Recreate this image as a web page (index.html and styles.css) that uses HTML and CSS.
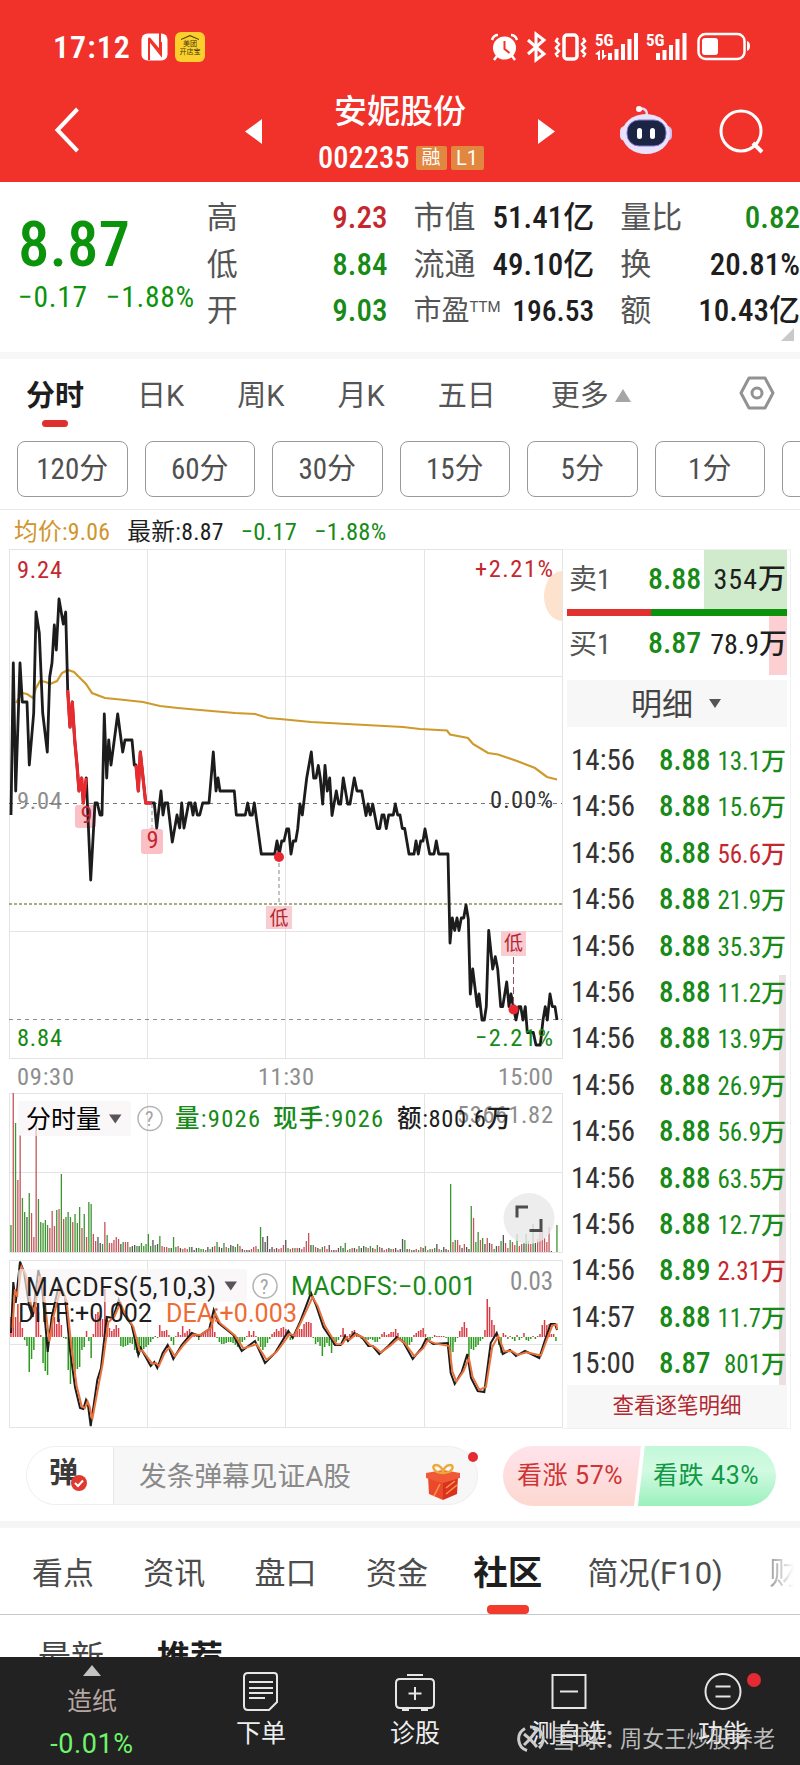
FILE: index.html
```
<!DOCTYPE html>
<html lang="zh-CN">
<head>
  <meta charset="UTF-8" />
  <meta name="viewport" content="width=device-width, initial-scale=1.0"/>
  <title>安妮股份 002235</title>
  <link rel="stylesheet" href="styles.css">
</head>
<body>

  <header>
    <div class="status">
      <span class="clock">17:12</span>
      <svg class="nfc" width="28" height="28" viewBox="0 0 28 28">
        <rect x="0.5" y="0.5" width="26" height="27" rx="6" fill="#fff"/>
        <path d="M8 27V7l12 15V9" fill="none" stroke="#f0322b" stroke-width="2"/>
        <path d="M19 0v18L8 5" fill="none" stroke="#f0322b" stroke-width="2"/>
      </svg>
      <span class="app"><i></i>美团<br>开店宝</span>
      <svg class="status-icons" width="262" height="32" viewBox="489 31 262 32">
        <g fill="#fff" stroke="#fff">
          <circle cx="503.500" cy="48" r="11.500" stroke="none"/>
          <path d="M491 40c1-3 3-5 6-5M516 40c-1-3-3-5-6-5M496 56l-3 4M511 56l3 4" fill="none" stroke-width="2.500"/>
          <path d="M503.500 41v8l5 4" fill="none" stroke="#f0322b" stroke-width="2"/>
          <path d="M527 40l16 14-8 6V34l8 6-16 14" fill="none" stroke-width="3"/>
          <rect x="563" y="35" width="13" height="24" rx="3" fill="none" stroke-width="3.500"/>
          <path d="M557 38l-2 3 3 3-3 4 3 3-3 3 2 3M582 38l2 3-3 3 3 4-3 3 3 3-2 3" fill="none" stroke-width="2.500"/>
          <g stroke="none">
            <path d="M607 53h4v7h-4zM613.500 49h4v11h-4zM620 44h4v16h-4zM626.500 39h4v21h-4zM633 33h4v27h-4z"/>
            <path d="M655 53h4v7h-4zM661.500 50h4v10h-4zM668 45h4v15h-4zM674.500 39h4v21h-4zM681.500 33h4v27h-4z"/>
            <path d="M594 54l5-4v10h-2v-5zM601 50v10l5-5h-3v-5z"/>
            <rect x="701" y="38" width="16" height="17" rx="3"/>
            <path d="M746 41c4 1 4 9 0 10z"/>
          </g>
          <rect x="697.500" y="34" width="46" height="25" rx="7" fill="none" stroke-width="2.500"/>
        </g>
        <g class="five-g"><text x="594" y="46">5G</text><text x="645" y="46">5G</text></g>
      </svg>
    </div>
    <nav class="title-bar">
      <svg class="back" width="26" height="46" viewBox="0 0 26 46"><path d="M23.500 2L3.500 23l20 21" fill="none" stroke="#fff" stroke-width="4"/></svg>
      <svg class="prev" width="17" height="25" viewBox="0 0 17 25"><path d="M17 0v25L0 12.500z" fill="#fff"/></svg>
      <div class="stock">
        <h1>安妮股份</h1>
        <p>002235<span class="badge">融</span><span class="badge">L1</span></p>
      </div>
      <svg class="next" width="17" height="25" viewBox="0 0 17 25"><path d="M0 0v25l17-12.500z" fill="#fff"/></svg>
      <svg class="robot" width="54" height="50" viewBox="618 105 54 50">
        <path d="M637 109q9-2 9 6" fill="none" stroke="#e4d9fa" stroke-width="2.500"/>
        <circle cx="638" cy="109" r="3" fill="#fff"/>
        <rect x="619" y="126" width="10" height="15" rx="5" fill="#e8dcfb"/>
        <rect x="661" y="126" width="10" height="15" rx="5" fill="#cfc0f7"/>
        <ellipse cx="645" cy="134" rx="24" ry="20" fill="#e9e2fd"/>
        <rect x="626" y="120" width="39" height="26" rx="12" fill="#1b2442" stroke="#8277d8" stroke-width="1"/>
        <rect x="636" y="128" width="5" height="11" rx="2.500" fill="#fff"/>
        <rect x="649" y="128" width="5" height="11" rx="2.500" fill="#fff"/>
      </svg>
      <svg class="search" width="46" height="46" viewBox="0 0 46 46"><circle cx="22" cy="22" r="20" fill="none" stroke="#fff" stroke-width="3"/><path d="M34 34l9 9" stroke="#fff" stroke-width="4"/></svg>
    </nav>
  </header>

  <section class="quote">
    <div class="now">
      <b>8.87</b>
      <p><span>−0.17</span><span>−1.88%</span></p>
    </div>
    <dl class="col1">
      <dt>高</dt><dd class="up">9.23</dd>
      <dt>低</dt><dd class="down">8.84</dd>
      <dt>开</dt><dd class="down">9.03</dd>
    </dl>
    <dl class="col2">
      <dt>市值</dt><dd>51.41亿</dd>
      <dt>流通</dt><dd>49.10亿</dd>
      <dt class="pe">市盈<sup>TTM</sup></dt><dd class="pe-value">196.53</dd>
    </dl>
    <dl class="col3">
      <dt>量比</dt><dd class="down">0.82</dd>
      <dt>换</dt><dd>20.81%</dd>
      <dt>额</dt><dd>10.43亿</dd>
    </dl>
    <i class="corner"></i>
  </section>

  <section class="period">
    <div class="tabs">
      <span class="active">分时</span><span>日K</span><span>周K</span><span>月K</span><span>五日</span><span>更多<i class="tri-up"></i></span>
      <svg width="36" height="34" viewBox="0 0 36 34"><path d="M10 2h16l8 15-8 15H10L2 17z" fill="none" stroke="#929292" stroke-width="3" stroke-linejoin="round"/><circle cx="18" cy="17" r="5" fill="none" stroke="#929292" stroke-width="3"/></svg>
    </div>
    <div class="minutes">
      <span>120分</span><span>60分</span><span>30分</span><span>15分</span><span>5分</span><span>1分</span><span></span>
    </div>
    <p class="latest"><span class="avg">均价:9.06</span><span>最新:8.87</span><span class="down">−0.17</span><span class="down">−1.88%</span></p>
  </section>

  <main>
    <svg class="chart" width="563" height="880" viewBox="0 549 563 880">
      <g class="grid">
        <path d="M9.500 549.500H562.500V1058.500H9.500zM147.500 549V1058M285.500 549V1058M424.500 549V1058M9 676.500H562M9 931.500H562"/>
        <path d="M9.500 1093.500H562.500V1252.500H9.500zM147.500 1093V1252M285.500 1093V1252M424.500 1093V1252M9 1172.500H562"/>
        <path d="M9.500 1260.500H562.500V1427.500H9.500zM147.500 1260V1427M285.500 1260V1427M424.500 1260V1427M9 1344.500H562"/>
      </g>
      <path d="M562 571a18 25 0 0 0 0 50z" fill="#fde3cd"/>

      <!-- price -->
      <g class="nums">
        <text x="17" y="578" class="up" textLength="45">9.24</text>
        <text x="475" y="577" class="up" textLength="78">+2.21%</text>
        <text x="17" y="809" class="grey" textLength="45">9.04</text>
        <text x="17" y="1046" class="down" textLength="45">8.84</text>
      </g>
      <path d="M9 803.500H562" stroke="#777" stroke-dasharray="4 4"/>
      <path d="M9 904H562" stroke="#8b9460" stroke-width="1.500" stroke-dasharray="3 2"/>
      <path d="M9 1019.500H562" stroke="#8d8d80" stroke-dasharray="4 4"/>
      <polyline class="avg-line" points="16,703 22,693 27,694 33,698 36,688 40,681 46,682 50,684 57,681 62,673 68,670 74,672 79,677 86,684 92,693 105,698 120,699.5 143,702 160,706 178,708 200,710 235,713 255,714 268,718 280,719 311,722 347,724 403,727 420,729 447,730.5 450,734.5 468,738 473,744 488,753 498,754.5 517,761 535,768 547,777 557,779.5"/>
      <rect x="75" y="805" width="21" height="23" rx="3" class="mark"/>
      <path d="M141 832q0-3 3-3h5l3-3 3 3h5q3 0 3 3v19q0 3-3 3h-16q-3 0-3-3z" class="mark"/>
      <polyline class="price" points="11,815 13.3,663 15.7,791 20,663 22.3,702 27,702 29.3,765 33.7,713 36,612 39.3,633 42.7,713 47.3,752 49.7,677 52,663 54.3,625 56.3,650 59,599 63.3,624 65.7,612 67.7,690 70,727 72.3,702 74.7,740 77,765 79,791 81.7,778 83.3,803 86.3,778 90.7,880 95,803 97.3,803 100,815 102,815 104.3,714 106.7,778 108.7,740 111,765 117.7,714 122.7,752 125,740 132,740 134.3,765 136,765 138.3,791 140.3,752 145.7,803 154.3,803 156.7,828 161,791 163,815 165,803 167.7,803 172.3,842 177,815 179.7,828 181.7,803 184,828 188.7,803 191,803 193,815 195,803 197.3,815 199.7,815 202.7,803 209,803 213.3,752 216,791 218,778 220,791 234.3,791 236.3,815 245.3,815 247.7,803 250,815 252.3,815 254.3,803 261.3,854 274.7,854 277,841 279.3,854 281.7,841 284,841 286.7,829 288.7,829 291,854 293.3,841 295.7,841 297.7,829 300,804 302.3,815 306.7,778 311.3,752 313.7,778 316,778 318.3,765.5 320.3,778 322.7,804 325,765.5 327.3,791 329.7,778 332,815.5 336.3,791 338.7,804 340.7,804 343.3,778 347.7,804 350,804 354.3,778 357,791 361.7,791 366,815.5 368,804 370.3,815 372.7,804 377.3,828.5 379.7,828.5 382,815 384,815 386.3,828.5 388.7,815 393.3,815 395.3,804 397.7,815 400,815 402.3,828.5 404.7,828.5 409,854 414,854 416,841 418.3,854 420.7,841 423,841 425,829 429.7,854 434,854 436.3,841 438.7,854 448,854 450,943 452.3,918 454.7,930.5 457,918 459,930.5 461.3,918 463.7,918 466,905 468.3,919 470.3,994 472.7,969 477.3,1006.6 479,994 482,1020 484.3,1020 486.3,1006.6 488.7,930.5 492.7,969 495.3,956.7 497.7,969 500.7,1006.6 502.7,1006.6 506.7,982 509,1006.6 511,994 513.3,1006.6 516,1020 518.7,1006.6 520.7,1006.6 523,1020 525.3,1006.6 527.3,1032.5 533.3,1032.5 536,1045 540.3,1045 543,1020 545.3,1006.6 547.3,1020 550,994 552.3,1006.6 555,1006.6 557,1020"/>
      <polyline class="price hot" points="67.7,690 70,727 72.3,702 74.7,740 77,765 79,791 81.7,778 83.3,803 86.3,778"/>
      <polyline class="price hot" points="136,765 138.3,791 140.3,752 145.7,803 152,803"/>
      <g class="nums">
        <text x="490" y="808" textLength="63" fill="#333">0.00%</text>
        <text x="475" y="1046" class="down" textLength="78">−2.21%</text>
        <text x="80.500" y="823" class="up">9</text>
        <text x="146.500" y="848" class="up">9</text>
      </g>
      <path d="M152 804V826M279 863V905" stroke="#888" stroke-dasharray="4 3"/>
      <path d="M513.500 957V1005" stroke="#8c5560" stroke-dasharray="7 3"/>
      <circle cx="279" cy="857" r="5" fill="#ea2630"/>
      <circle cx="513.500" cy="1009.500" r="5" fill="#ea2630"/>
      <rect x="266" y="906" width="26" height="23" class="low"/>
      <rect x="501" y="931" width="25" height="25" class="low"/>
      <g class="low-text"><text x="269.500" y="925">低</text><text x="504" y="950">低</text></g>
      <g class="nums grey">
        <text x="17" y="1084.500" textLength="57">09:30</text>
        <text x="258" y="1084.500" textLength="56">11:30</text>
        <text x="498" y="1084.500" textLength="55">15:00</text>
      </g>

      <!-- volume -->
      <g id="volume"></g>
      <rect x="18" y="1101" width="113" height="35" rx="3" class="pick"/>
      <text x="26" y="1128" class="label">分时量</text>
      <path d="M109 1114.500h12.500l-6.200 9z" fill="#58545a"/>
      <circle cx="150" cy="1118.500" r="12" class="help"/>
      <text x="145" y="1126" class="help-text">?</text>
      <g class="nums">
        <text x="457" y="1123" textLength="96" class="grey">53661.82</text>
        <text x="175" y="1127" textLength="85" class="down">量:9026</text>
        <text x="273" y="1127" textLength="110" class="down">现手:9026</text>
        <text x="397" y="1127" textLength="114" fill="#1e1e1e">额:800.6万</text>
      </g>
      <circle cx="529" cy="1218.500" r="25.500" fill="#e9e9e9" fill-opacity="0.800"/>
      <path d="M517 1217.500v-10.500h11M541 1219v11.500h-11.500" fill="none" stroke="#4d4d4d" stroke-width="3"/>

      <!-- macd -->
      <g id="macd"></g>
      <polyline id="diff" class="diff" points="11,1333 13.3,1282 15.7,1303 20,1261.7 24,1272 29.3,1307 32.7,1317 38.3,1270 41.7,1283 47.7,1352 51.7,1317 59.3,1283 65,1297 70,1350 75,1387 80,1408 83.3,1409 86,1400 88,1405 90.7,1426 97.3,1380 101,1368 106.7,1317 113,1318 118.7,1300 123,1313 131.7,1325 138.3,1355 140.7,1348 150.7,1366 154.3,1362 157.3,1368 162.7,1353 167.7,1345 173.3,1359 181.7,1345 191.7,1333 199,1336 209.3,1329 213.7,1310 218.3,1323 233.3,1335 241.7,1351 255,1341 265,1363 275,1353 288.3,1331 292.7,1338 300,1322 311,1293 316,1305 323.3,1327 330,1337 335,1345 340.7,1345 345,1336 348,1341 354.3,1333 361.7,1337 368.3,1346 372.7,1346 379.3,1354 388.3,1346 396.7,1337 403.3,1342 412.7,1359 421.7,1348 426,1339 433.3,1344 447.7,1343 450.7,1373 454.7,1384 461.7,1372 467.3,1354 471,1378 477.7,1391 484.3,1392 490.7,1343 496.7,1333 502.7,1354 510,1350 516,1356 525,1351 539.3,1358 545,1340 550.7,1324 555,1324 557,1330"/>
      <polyline id="dea" class="dea"/>
      <rect x="18" y="1269" width="229" height="33" rx="3" class="pick"/>
      <path d="M224.500 1281.500h12.500l-6.200 9z" fill="#58545a"/>
      <circle cx="265" cy="1286" r="12" class="help"/>
      <text x="260" y="1293.500" class="help-text">?</text>
      <g class="nums wide">
        <text x="26" y="1295.500" textLength="190" fill="#1e1e1e">MACDFS(5,10,3)</text>
        <text x="291" y="1294.500" textLength="185" class="down">MACDFS:−0.001</text>
        <text x="510" y="1290" textLength="43" class="grey narrow">0.03</text>
        <text x="18" y="1321.500" textLength="134" fill="#1e1e1e">DIFF:+0.002</text>
        <text x="166" y="1321.500" textLength="131" fill="#ee6b35">DEA:+0.003</text>
      </g>
    </svg>

    <aside>
      <div class="order sell"><span>卖1</span><b>8.88</b><em>354万</em></div>
      <div class="ratio"><i></i></div>
      <div class="order buy"><span>买1</span><b>8.87</b><em>78.9万</em></div>
      <div class="detail">明细<i class="tri-down"></i></div>
      <ul id="trades"></ul>
      <div class="more">查看逐笔明细</div>
    </aside>
  </main>

  <section class="danmu">
    <div class="input">
      <span class="dan">弹<svg width="16" height="16" viewBox="0 0 16 16"><circle cx="8" cy="8" r="8" fill="#e03a30"/><path d="M4 8l3 3 5-5.500" fill="none" stroke="#fff" stroke-width="2"/></svg></span>
      <span class="hint">发条弹幕见证A股</span>
      <svg class="gift" width="36" height="38" viewBox="425 1463 36 38">
        <path d="M428 1477l15 4v19l-14-6z" fill="#ea4a2b"/>
        <path d="M458 1477l-15 4v19l14-6z" fill="#d9331f"/>
        <path d="M426 1473l17-3 17 3v5l-17 5-17-5z" fill="#f15a37"/>
        <path d="M446 1494l11-9M446 1488l9-7M434 1496l6-12" stroke="#f99a4b" stroke-width="1.500"/>
        <path d="M443 1473c-10 0-12-8-7-8 4 0 7 4 7 8 0-4 3-8 7-8 5 0 3 8-7 8z" fill="none" stroke="#eba936" stroke-width="2.500"/>
      </svg>
      <i class="dot"></i>
    </div>
    <div class="vote">
      <span class="rise">看涨 57%</span><span class="fall">看跌 43%</span>
    </div>
  </section>

  <section class="community">
    <div class="tabs2">
      <span>看点</span><span>资讯</span><span>盘口</span><span>资金</span><span class="active">社区</span><span>简况(F10)</span><span class="fade">财</span>
    </div>
    <div class="sub"><span>最新</span><b>推荐</b></div>
  </section>

  <footer>
    <div class="index"><i class="tri-up"></i><span>造纸</span><em>-0.01%</em></div>
    <div class="item">
      <svg width="42" height="42" viewBox="0 0 42 42"><path d="M8 2h26q3 0 3 3v26l-8 8H8q-4 0-4-4V6q0-4 4-4zM9 11h24M9 17h24M9 22h24M9 27h16" /></svg>
      <span>下单</span>
    </div>
    <div class="item">
      <svg width="42" height="42" viewBox="0 0 42 42"><path d="M6 8h30q4 0 4 4v21q0 4-4 4H6q-4 0-4-4V12q0-4 4-4zM13 4h16M21 16v13M14.500 22.500h13M8 39h7M27 39h7"/></svg>
      <span>诊股</span>
    </div>
    <div class="item">
      <svg width="42" height="42" viewBox="0 0 42 42"><path d="M4.500 4h33v33h-33zM12 20.500h18"/></svg>
      <span>测自选</span>
    </div>
    <div class="item">
      <svg width="42" height="42" viewBox="0 0 42 42"><circle cx="21" cy="20.500" r="17.500"/><path d="M13.500 15.500h15M13.500 25.500h15"/></svg>
      <span>功能</span>
      <i class="dot"></i>
    </div>
    <div class="watermark">
      <svg width="28" height="28" viewBox="0 0 28 28"><path d="M10 25.500A12 12 0 0 1 8 3.500M13 2a12 12 0 0 1 9 21M7 9l6 5-6 6M20 5l-7 9 7 8" fill="none" stroke="#ccc" stroke-width="3"/></svg>
      <span>雪球：</span><span>周女王炒股养老</span>
    </div>
  </footer>

  <script>
    const STEP = 2.29;
    const COLORS = { r: '#c8545a', g: '#3f9433', k: '#555' };

    // one entry per minute, colour + height
    const volume = ('g27 r159 g129 r72 r117 g54 g40 k35 g59 r39 r15 r126 g53 g30 g29 g32 g27 r24 r41 r26 g42 r43 g78 r33 g35 g40 g35 r30 g38 g29 g45 r24 g38 r15 g50 g48 r18 r11 k15 k9 g8 r30 g17 r9 r9 r12 r15 r13 k8 g10 r10 r10 g5 k6 k7 g6 k6 g9 g6 g8 g18 g6 k12 g7 k8 g16 r6 r5 r5 g4 k4 g15 g5 r6 k4 r3 r4 r3 g5 k5 k2 k4 g4 g3 g3 ' +
      'r2 k5 g3 k5 r6 g10 k5 k4 g9 r5 g4 k7 k6 g5 g8 r6 k3 r2 k2 k2 r3 r5 r6 g3 g25 k15 k10 k16 k3 k5 r3 k4 r3 r4 r7 k12 g4 r3 r4 g4 r4 k4 r3 r5 r11 r19 k7 g7 r5 k4 r3 g5 r6 r3 k7 r2 k2 r2 k4 g6 k4 g9 r2 g3 r4 k4 r3 g6 k4 k6 g5 r4 g6 k4 r3 g7 r5 k4 r2 r3 k4 g3 r3 k4 r2 k3 k13 g12 k3 r3 g2 ' +
      'k2 r3 g2 r5 k4 g6 r2 g3 r3 g4 k8 r3 g2 k5 k3 r2 g68 r10 g12 r12 r7 k4 r8 k5 k3 g46 r34 g10 g20 r12 g14 k8 r14 k9 r8 g3 k6 r6 g11 k17 r9 r4 g12 r10 r7 g18 r6 r8 k9 g18 r11 r8 g28 k9 r13 r20 r21 r14 r10 r25 k1').trim().split(/\s+/);

    const macd = [20,25,20,33,15,9,-3,-9,-35,-22,-13,30,25,2,-26,-34,-38,-2,12,20,13,18,12,-1,-2,-33,-47,-20,-35,-32,-30,-13,-10,6,-4,-21,3,23,25,22,18,48,20,9,6,8,12,9,-9,-10,-9,-8,-6,-7,-13,-16,-18,-14,-12,-10,-8,-5,-2,1,-1,12,6,6,7,2,-4,-8,1,5,2,11,4,6,8,5,2,1,-3,2,3,5,8,13,17,5,-1,-5,-7,-7,-6,-5,-5,-6,-8,-10,-8,-5,-3,1,6,2,6,1,-4,-10,-13,-10,-6,-2,3,5,8,6,9,10,8,5,-3,1,2,6,8,8,13,15,15,14,-1,-7,-5,-9,-19,-10,-6,-9,-16,-8,-5,-3,2,9,3,1,3,6,7,4,1,-2,-3,-6,-3,-2,-3,-5,-5,-2,3,5,2,3,5,5,8,4,-2,-6,-9,-11,-8,-5,2,4,6,7,9,3,-2,-3,-1,2,1,1,1,1,-1,-12,-20,-15,-5,-1,6,10,15,9,-20,-12,-13,-10,-8,-4,-2,7,38,30,17,12,4,-8,-16,4,2,-2,1,-2,-4,2,-3,-1,4,-3,-4,-2,1,-2,1,3,12,17,12,13,3,3,-4];

    function bar(x, y, h, color, w) {
      return `<rect x="${x.toFixed(1)}" y="${y}" width="${w}" height="${h}" fill="${color}"/>`;
    }
    document.getElementById('volume').innerHTML = volume.slice(0, 237)
      .map((v, i) => bar(10.3 + i * STEP, 1252 - v.slice(1), v.slice(1), COLORS[v[0]], 1.3)).join('') + bar(556.3, 1225, 27, COLORS.g, 1.3);
    document.getElementById('macd').innerHTML = macd
      .map((v, i) => bar(10.2 + i * STEP, v > 0 ? 1337 - v : 1337, Math.abs(v), v > 0 ? '#d93c45' : '#2f9a22', 1.5)).join('');

    // signal line follows the diff line a little behind
    const diff = document.getElementById('diff').getAttribute('points').split(' ').map(p => p.split(',').map(Number));
    document.getElementById('dea').setAttribute('points', diff.map(([x, y], i) => {
      const a = diff[Math.max(i - 1, 0)][1], b = diff[Math.min(i + 1, diff.length - 1)][1];
      return Math.min(x + 1.6, 557) + ',' + (y * 0.8 + (a + b) * 0.1);
    }).join(' '));

    const trades = [
      ['14:56', '8.88', '13.1万'], ['14:56', '8.88', '15.6万'], ['14:56', '8.88', '56.6万', 'up'],
      ['14:56', '8.88', '21.9万'], ['14:56', '8.88', '35.3万'], ['14:56', '8.88', '11.2万'],
      ['14:56', '8.88', '13.9万'], ['14:56', '8.88', '26.9万'], ['14:56', '8.88', '56.9万'],
      ['14:56', '8.88', '63.5万'], ['14:56', '8.88', '12.7万'], ['14:56', '8.89', '2.31万', 'up'],
      ['14:57', '8.88', '11.7万'], ['15:00', '8.87', '801万']
    ];
    document.getElementById('trades').innerHTML = trades
      .map(t => `<li><span>${t[0]}</span><b>${t[1]}</b><em class="${t[3] || 'down'}">${t[2]}</em></li>`).join('');
  </script>
</body>
</html>
```
FILE: styles.css
```
* {
  box-sizing: border-box;
}
body {
  margin: 0;
  width: 800px;
  height: 1765px;
  overflow: hidden;
  background: #fff;
  color: #1e1e1e;
  font-family: 'Roboto Condensed', 'Noto Sans CJK SC', sans-serif;
}
h1, p, dl, dd, ul {
  margin: 0;
  padding: 0;
}
i, em {
  font-style: normal;
}
svg {
  display: block;
  flex: none;
}
.up {
  color: #c4282e;
  fill: #c4282e;
}
.down {
  color: #178a17;
  fill: #178a17;
}
.grey {
  fill: #8e8e8e;
}

/* header */
header {
  height: 182px;
  background: #f0322b;
  color: #fff;
}
.status {
  display: flex;
  align-items: center;
  height: 94px;
  padding-left: 53px;
}
.clock {
  width: 88px;
  font-size: 32px;
  font-weight: 600;
  letter-spacing: 1px;
}
.app {
  width: 30px;
  height: 30px;
  margin-left: 6px;
  padding-top: 3px;
  border-radius: 6px;
  background: #fbd02c;
  color: #4a3a10;
  font-size: 7px;
  line-height: 7.5px;
  text-align: center;
}
.app i {
  display: block;
  width: 18px;
  height: 5px;
  margin: 0 auto 1px;
  background: #4a3a10;
  clip-path: polygon(0 80%, 50% 0, 100% 80%, 100% 100%, 50% 25%, 0 100%);
}
.status-icons {
  margin-left: 285px;
}
.five-g text {
  font-size: 17px;
  font-weight: 700;
  fill: #fff;
}
.title-bar {
  display: flex;
  align-items: flex-start;
  height: 88px;
}
.back {
  margin: 13px 0 0 54px;
}
.prev {
  margin: 25px 0 0 165px;
}
.stock {
  width: 276px;
  text-align: center;
}
.stock h1 {
  font-size: 33px;
  font-weight: 500;
  line-height: 36px;
}
.stock p {
  display: flex;
  align-items: center;
  height: 28px;
  margin: 13px 0 0 56px;
  padding-top: 2px;
  font-size: 30.500px;
  font-weight: 500;
  line-height: 28px;
}
.badge {
  width: 31px;
  height: 24px;
  margin-left: 6px;
  border-radius: 2px;
  background: #e2873f;
  font-size: 19px;
  font-weight: 400;
  line-height: 24px;
}
.badge + .badge {
  width: 33px;
  margin-left: 4px;
  font-family: Roboto, sans-serif;
  font-size: 20px;
}
.next {
  margin-top: 25px;
}
.robot {
  margin: 11px 0 0 64px;
}
.search {
  margin: 15px 0 0 46px;
}

/* quote */
.quote {
  position: relative;
  display: flex;
  height: 177px;
  padding-top: 14px;
  border-bottom: 7px solid #f7f7f7;
}
.now {
  width: 207px;
  padding-left: 18px;
  color: #0c930c;
}
.now b {
  display: block;
  height: 70px;
  margin-top: 12px;
  font-size: 63px;
  font-weight: 500;
  line-height: 74px;
}
.now p {
  display: flex;
  gap: 18px;
  font-size: 29.500px;
  line-height: 39px;
  letter-spacing: 0.7px;
}
.quote dl {
  display: grid;
  grid-template-columns: 60px 1fr;
  grid-auto-rows: 46.500px;
  line-height: 44px;
}
.quote dt {
  color: #555;
  font-size: 31px;
  white-space: nowrap;
}
.quote dd {
  text-align: right;
  font-size: 31px;
  font-weight: 500;
  white-space: nowrap;
}
.quote .col1 {
  width: 181px;
}
.quote .col2 {
  width: 181px;
  margin-left: 26px;
}
.quote .col3 {
  width: 180px;
  margin-left: 26px;
}
.quote .pe {
  font-size: 28px;
}
.quote .pe-value {
  font-size: 29.500px;
}
.quote sup {
  font-family: Roboto, sans-serif;
  font-size: 15px;
  line-height: 0;
  vertical-align: 8px;
}
.corner {
  position: absolute;
  right: 6px;
  bottom: 11px;
  border-left: 13px solid transparent;
  border-bottom: 13px solid #c9c9c9;
}

/* period tabs */
.period {
  height: 190px;
}
.tabs {
  display: flex;
  align-items: center;
  height: 72px;
  padding: 0 25px 4px 26px;
  font-family: Roboto, 'Noto Sans CJK SC', sans-serif;
  font-size: 29px;
  color: #555;
}
.tabs span {
  position: relative;
  margin-right: 53px;
}
.tabs span:nth-child(5) {
  margin-right: 55px;
}
.tabs .active {
  color: #1e1e1e;
  font-weight: 700;
}
.tabs .active::after {
  content: '';
  position: absolute;
  left: 16px;
  bottom: -13px;
  width: 26px;
  height: 7px;
  border-radius: 4px;
  background: #df3030;
}
.tri-up {
  display: inline-block;
  margin: 0 0 4px 6px;
  border: 8px solid transparent;
  border-top: 0;
  border-bottom: 13px solid #a5a5a5;
}
.tabs svg {
  margin-left: auto;
}
.minutes {
  display: flex;
  gap: 17px;
  width: 800px;
  height: 79px;
  padding: 10px 0 0 17px;
  border-bottom: 1px solid #e8e8e8;
  overflow: hidden;
}
.minutes span {
  flex: none;
  width: 110.500px;
  height: 56px;
  border: 1px solid #999;
  border-radius: 8px;
  color: #505050;
  font-size: 29px;
  line-height: 55px;
  text-align: center;
}
.latest {
  display: flex;
  gap: 17px;
  padding-left: 14px;
  font-size: 23.700px;
  line-height: 42px;
  letter-spacing: 0.3px;
  margin-top: 1px;
}
.latest .down {
  font-size: 24.500px;
}
.latest .avg {
  color: #d0952b;
}

/* charts */
main {
  display: flex;
  height: 880px;
}
.grid path {
  fill: none;
  stroke: #e4e4e4;
}
.nums text {
  font-size: 24.500px;
  font-weight: 450;
}
.nums.wide text {
  font-family: Roboto, sans-serif;
  font-size: 25px;
  font-weight: 400;
}
.nums.wide .narrow {
  font-family: 'Roboto Condensed', sans-serif;
}
.price {
  fill: none;
  stroke: #1c1c1c;
  stroke-width: 2.800;
  stroke-linejoin: round;
}
.price.hot {
  stroke: #e92a2e;
  stroke-width: 3.200;
}
.avg-line {
  fill: none;
  stroke: #cf9a2c;
  stroke-width: 2.200;
}
.mark {
  fill: #fac0c6;
}
.low {
  fill: #f9ccd2;
}
.low-text {
  font-size: 19px;
  fill: #b3272f;
}
.pick {
  fill: #f6f3f5;
  fill-opacity: 0.65;
}
.label {
  font-size: 25px;
}
.help {
  fill: none;
  stroke: #b4b4b4;
  stroke-width: 1.500;
}
.help-text {
  font-size: 20px;
  fill: #a4a4a4;
}
.diff {
  fill: none;
  stroke: #1c1c1c;
  stroke-width: 2;
}
.dea {
  fill: none;
  stroke: #e8713c;
  stroke-width: 2;
}

/* order book */
aside {
  width: 228px;
  padding: 0 3px 0 4px;
  border: 1px solid #f0f0f0;
  border-left: 0;
}
.order {
  display: flex;
  align-items: center;
  height: 59px;
  padding: 0 0 5px 2px;
}
.buy {
  padding-bottom: 8px;
}
.order span {
  width: 79px;
  font-size: 28px;
  color: #555;
}
.order b {
  width: 55px;
  padding-top: 2px;
  color: #178a17;
  font-size: 30px;
  font-weight: 500;
}
.order em {
  flex: 1;
  font-size: 28px;
  font-weight: 450;
  text-align: right;
}
.sell em {
  letter-spacing: 1px;
}
.sell {
  background: linear-gradient(to left, #d0ebcc 83px, #fff 83px);
}
.buy {
  background: linear-gradient(to left, #fccfd2 18px, #fff 18px);
}
.ratio {
  height: 7px;
  background: #0c930c;
}
.ratio i {
  display: block;
  width: 84px;
  height: 7px;
  background: #e0302f;
}
.detail {
  display: flex;
  align-items: center;
  justify-content: center;
  height: 47px;
  margin-top: 5px;
  padding: 0 2px 4px 0;
  background: #f7f7f7;
  color: #444;
  font-size: 31px;
}
.tri-down {
  margin: 4px 0 0 16px;
  border: 6px solid transparent;
  border-bottom: 0;
  border-top: 9px solid #555;
}
#trades {
  height: 658px;
  padding-top: 10px;
  list-style: none;
  background: linear-gradient(#ece0e1, #ece0e1) 212px 248px / 7px 410px no-repeat;
}
#trades li {
  display: flex;
  align-items: baseline;
  height: 46.400px;
  padding: 0 1px 0 4px;
  line-height: 47px;
  font-size: 29px;
}
#trades span {
  width: 88px;
  color: #333;
  font-weight: 450;
}
#trades b {
  width: 51px;
  color: #178a17;
  font-weight: 500;
}
#trades em {
  flex: 1;
  font-size: 25px;
  font-weight: 450;
  text-align: right;
  white-space: nowrap;
}
.more {
  height: 43px;
  background: #f7f7f7;
  color: #b3272f;
  font-size: 21.500px;
  line-height: 42px;
  text-align: center;
}

/* danmu */
.danmu {
  display: flex;
  height: 99px;
  padding: 17px 0 0 26px;
  border-bottom: 7px solid #f5f5f5;
}
.input {
  position: relative;
  display: flex;
  width: 452px;
  height: 59px;
  border: 1px solid #eee;
  border-radius: 30px;
  background: #f7f7f7;
}
.dan {
  position: relative;
  width: 87px;
  padding-left: 22px;
  border-right: 1px solid #e8e8e8;
  border-radius: 29px 0 0 29px;
  background: #fff;
  color: #3a3a3a;
  font-size: 29px;
  font-weight: 700;
  line-height: 53px;
}
.dan svg {
  position: absolute;
  left: 44px;
  top: 28px;
}
.hint {
  width: 286px;
  padding-left: 25px;
  color: #8a8a8a;
  font-family: Roboto, 'Noto Sans CJK SC', sans-serif;
  font-size: 27.700px;
  line-height: 59px;
}
.gift {
  margin: 16px 0 0 25px;
}
.dot {
  position: absolute;
  width: 10px;
  height: 10px;
  border-radius: 50%;
  background: #e42a33;
}
.input .dot {
  right: -1px;
  top: 5px;
}
.vote {
  display: flex;
  width: 273px;
  height: 60px;
  margin-left: 25px;
  font-family: Roboto, 'Noto Sans CJK SC', sans-serif;
  font-size: 25px;
  letter-spacing: 0.6px;
  line-height: 59px;
}
.vote span {
  width: 138px;
  padding-left: 14px;
  white-space: nowrap;
}
.rise {
  border-radius: 30px 0 0 30px;
  background: linear-gradient(#ffe3ec, #fdd8d0);
  color: #cf3434;
  clip-path: polygon(0 0, 100% 0, 95% 100%, 0 100%);
}
.vote .fall {
  margin-left: -3px;
  border-radius: 0 30px 30px 0;
  background: linear-gradient(#c2f8d9, #d3fae2 40%, #9af0bd);
  color: #0f9a45;
  clip-path: polygon(5% 0, 100% 0, 100% 100%, 0 100%);
  padding-left: 15px;
}

/* community */
.community {
  height: 129px;
  overflow: hidden;
}
.tabs2 {
  display: flex;
  align-items: center;
  gap: 49.300px;
  width: 800px;
  height: 87px;
  padding: 0 0 2px 32px;
  border-bottom: 1px solid #c8c8c8;
  color: #4c4c4c;
  font-family: Roboto, 'Noto Sans CJK SC', sans-serif;
  font-size: 31px;
  white-space: nowrap;
}
.tabs2 .active {
  position: relative;
  margin: 0 -4px;
  color: #1e1e1e;
  font-size: 34.500px;
  font-weight: 700;
}
.tabs2 .active::after {
  content: '';
  position: absolute;
  left: 14px;
  bottom: -19px;
  width: 42px;
  height: 9px;
  border-radius: 4px;
  background: #f23a2d;
}
.tabs2 .fade {
  width: 25px;
  margin-left: -3px;
  overflow: hidden;
  background: linear-gradient(to right, #999, #fff);
  background-clip: text;
  color: transparent;
}
.sub {
  display: flex;
  gap: 53px;
  padding: 24px 0 0 38px;
  color: #444;
  font-size: 33px;
  line-height: 37px;
}
.sub b {
  color: #1e1e1e;
}

/* bottom bar */
footer {
  position: relative;
  display: flex;
  height: 108px;
  background: #222;
  color: #eee;
  font-size: 25px;
}
.index {
  display: flex;
  flex-direction: column;
  align-items: center;
  width: 184px;
  color: #b5a6a3;
}
.index .tri-up {
  margin: 8px 0 0;
  border-left-width: 9px;
  border-right-width: 9px;
  border-bottom: 11px solid #c4c4c4;
}
.index span {
  margin-top: 10px;
  line-height: 32px;
}
.index em {
  margin-top: 10px;
  color: #6ff56a;
  font-family: Roboto, sans-serif;
  font-size: 27px;
  line-height: 32px;
  letter-spacing: 0.6px;
}
.item {
  position: relative;
  display: flex;
  flex-direction: column;
  align-items: center;
  width: 154px;
  padding-top: 14px;
}
.item svg {
  fill: none;
  stroke: #e6e6e6;
  stroke-width: 2;
}
.item span {
  margin-top: 5px;
  line-height: 32px;
}
.item .dot {
  right: 39px;
  top: 16px;
  width: 14px;
  height: 14px;
}
.watermark {
  position: absolute;
  left: 517px;
  top: 68px;
  display: flex;
  align-items: center;
  color: rgba(215, 215, 215, 0.85);
  line-height: 28px;
}
.watermark span {
  width: 69px;
  margin-left: 6px;
  font-size: 26px;
  white-space: nowrap;
}
.watermark span + span {
  width: auto;
  margin-left: 0;
  font-size: 22.200px;
}
```
